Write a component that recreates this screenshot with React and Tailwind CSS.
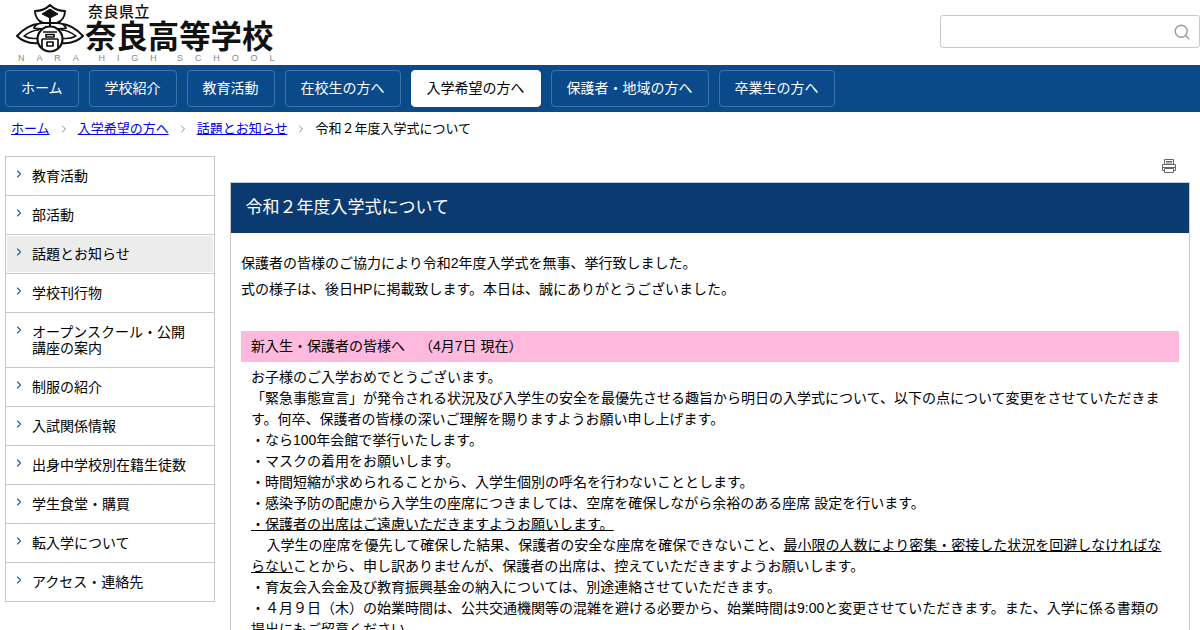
import { ChevronRight, Search } from 'lucide-react'

const NAV = [
  { label: 'ホーム' },
  { label: '学校紹介' },
  { label: '教育活動' },
  { label: '在校生の方へ' },
  { label: '入学希望の方へ', active: true },
  { label: '保護者・地域の方へ' },
  { label: '卒業生の方へ' },
]

const SIDE = [
  { label: '教育活動' },
  { label: '部活動' },
  { label: '話題とお知らせ', active: true },
  { label: '学校刊行物' },
  { label: 'オープンスクール・公開講座の案内' },
  { label: '制服の紹介' },
  { label: '入試関係情報' },
  { label: '出身中学校別在籍生徒数' },
  { label: '学生食堂・購買' },
  { label: '転入学について' },
  { label: 'アクセス・連絡先' },
]

function Emblem() {
  return (
    <svg width="70" height="50" viewBox="0 0 70 50" fill="none" stroke="#111" strokeWidth="2" strokeLinejoin="round">
      {/* side wings */}
      <path d="M24 21 C17 21 8 26 2 33 C7 38 14 41 24 40 M46 21 C53 21 62 26 68 33 C63 38 56 41 46 40" fill="#fff" />
      <path d="M24 27 C18 27 13 30 9 33 C14 36 19 36 24 35 M46 27 C52 27 57 30 61 33 C56 36 51 36 46 35" strokeWidth="1.5" />
      {/* upper leaves */}
      <path d="M35 2 C31 6 25 8 20 8 C20 13 23 18 28 20 C24 20 20 22 19 25 C25 27 30 26 35 25 C40 26 45 27 51 25 C50 22 46 20 42 20 C47 18 50 13 50 8 C45 8 39 6 35 2 Z" fill="#fff" />
      <path d="M27 11 L35 6 L43 11 L35 15 Z" fill="#111" strokeWidth="1" />
      <path d="M27 20 H43 M35 15 V25 M30 24 H40" strokeWidth="2" />
      {/* center circle with the school mark */}
      <circle cx="35" cy="36" r="12.5" fill="#fff" strokeWidth="2.2" />
      <path d="M28 29 H42 M31 31.5 H39 V34 H31 Z M27 36 V45 M43 36 V45 M27 36 H43 M32 39 H38 V43 H32 Z" strokeWidth="1.7" />
    </svg>
  )
}

function PrintIcon() {
  return (
    <svg width="14" height="14" viewBox="0 0 14 14" fill="none" stroke="#666" strokeWidth="1">
      <path d="M2.5 5.5 V0.5 H11.5 V5.5 M4 2.5 H10 M4 4 H10" />
      <path d="M2.5 11.5 H0.5 V5.5 H13.5 V11.5 H11.5" />
      <path d="M0.5 8.5 H13.5" />
      <path d="M2.5 9.5 H11.5 V13.5 H2.5 Z" />
    </svg>
  )
}

export default function App() {
  return (
    <div className="h-[630px] w-[1200px] overflow-hidden bg-white text-[14px] text-black [text-spacing-trim:space-all] [font-family:'Liberation_Sans','Noto_Sans_CJK_JP',sans-serif]">
      <header className="flex h-[65px] items-start justify-between">
        <div className="relative ml-[15px] flex h-[65px] w-[270px]">
          <div className="mt-[3px]"><Emblem /></div>
          <div className="flex flex-col text-[#111]">
            <span className="mt-[3px] ml-[3px] text-[15px] leading-[18px] font-medium tracking-[0.5px]">奈良県立</span>
            <span className="mt-[1px] text-[31.4px] leading-[32px] font-bold whitespace-nowrap">奈良高等学校</span>
          </div>
          <div className="absolute top-[53px] left-[3px] text-[9px] leading-[10px] tracking-[11.9px] whitespace-pre text-[#888] [word-spacing:-6px]">NARA HIGH SCHOOL</div>
        </div>
        <div className="mt-[15px] flex h-[33px] w-[260px] items-center justify-end rounded-[3px] border border-[#c8c8c8] pr-[8px]">
          <Search size={18} strokeWidth={1.8} className="text-[#999]" />
        </div>
      </header>

      <nav className="flex h-[47px] items-center gap-[10px] bg-[#0a4a8a] px-[5px]">
        {NAV.map((item) => (
          <a
            key={item.label}
            className={
              item.active
                ? 'flex h-[37px] items-center rounded-[4px] border border-white bg-white px-[15px] text-black'
                : 'flex h-[37px] items-center rounded-[4px] border border-[#3b74ad] px-[15px] text-white'
            }
          >
            {item.label}
          </a>
        ))}
      </nav>

      <div className="flex h-[34px] items-center pl-[11px] text-[13px]">
        <a className="text-[#0000ee] underline">ホーム</a>
        <ChevronRight size={12} className="mx-[8px] text-[#888]" />
        <a className="text-[#0000ee] underline">入学希望の方へ</a>
        <ChevronRight size={12} className="mx-[8px] text-[#888]" />
        <a className="text-[#0000ee] underline">話題とお知らせ</a>
        <ChevronRight size={12} className="mx-[8px] text-[#888]" />
        <span>令和２年度入学式について</span>
      </div>

      <div className="mt-[10px] flex items-start pl-[5px]">
        <aside className="w-[210px] border border-b-0 border-[#c8c8c8]">
          {SIDE.map((item) => (
            <div key={item.label} className="border-b border-[#c8c8c8] p-px">
              <div className={'flex py-[10px] pr-[20px] pl-[6px] leading-[16px] ' + (item.active ? 'bg-[#ececec]' : 'bg-white')}>
                <ChevronRight size={12} strokeWidth={2.2} className="mr-[7px] shrink-0 text-[#1d5c9c]" />
                <span>{item.label}</span>
              </div>
            </div>
          ))}
        </aside>

        <main className="ml-[15px] w-[960px]">
          <div className="mb-[6px] flex h-[20px] items-center justify-end pr-[14px]"><PrintIcon /></div>
          <div className="border border-b-0 border-[#c8c8c8] border-t-[#b9cfe0]">
            <h1 className="flex h-[50px] items-center bg-[#0a3a70] pl-[14.5px] text-[17px] text-white">令和２年度入学式について</h1>
            <div className="px-[10px] pt-[17px]">
              <p className="leading-[26px]">保護者の皆様のご協力により令和2年度入学式を無事、挙行致しました。</p>
              <p className="leading-[26px]">式の様子は、後日HPに掲載致します。本日は、誠にありがとうございました。</p>
              <h2 className="mt-[29px] flex h-[31px] items-center bg-[#ffb9dc] pl-[10px]">新入生・保護者の皆様へ　（4月7日 現在）</h2>
              <div className="mt-[5px] pr-[8px] pl-[10px] leading-[21px]">
                <p>お子様のご入学おめでとうございます。</p>
                <p>「緊急事態宣言」が発令される状況及び入学生の安全を最優先させる趣旨から明日の入学式について、以下の点について変更をさせていただきます。何卒、保護者の皆様の深いご理解を賜りますようお願い申し上げます。</p>
                <p>・なら100年会館で挙行いたします。</p>
                <p>・マスクの着用をお願いします。</p>
                <p>・時間短縮が求められることから、入学生個別の呼名を行わないこととします。</p>
                <p>・感染予防の配慮から入学生の座席につきましては、空席を確保しながら余裕のある座席 設定を行います。</p>
                <p><u>・保護者の出席はご遠慮いただきますようお願いします。</u></p>
                <p>{'\u00a0\u00a0\u00a0\u00a0'}入学生の座席を優先して確保した結果、保護者の安全な座席を確保できないこと、<u>最小限の人数により密集・密接した状況を回避しなければならない</u>ことから、申し訳ありませんが、保護者の出席は、控えていただきますようお願いします。</p>
                <p>・育友会入会金及び教育振興基金の納入については、別途連絡させていただきます。</p>
                <p>・４月９日（木）の始業時間は、公共交通機関等の混雑を避ける必要から、始業時間は9:00と変更させていただきます。また、入学に係る書類の提出にもご留意ください。</p>
              </div>
            </div>
          </div>
        </main>
      </div>
    </div>
  )
}
